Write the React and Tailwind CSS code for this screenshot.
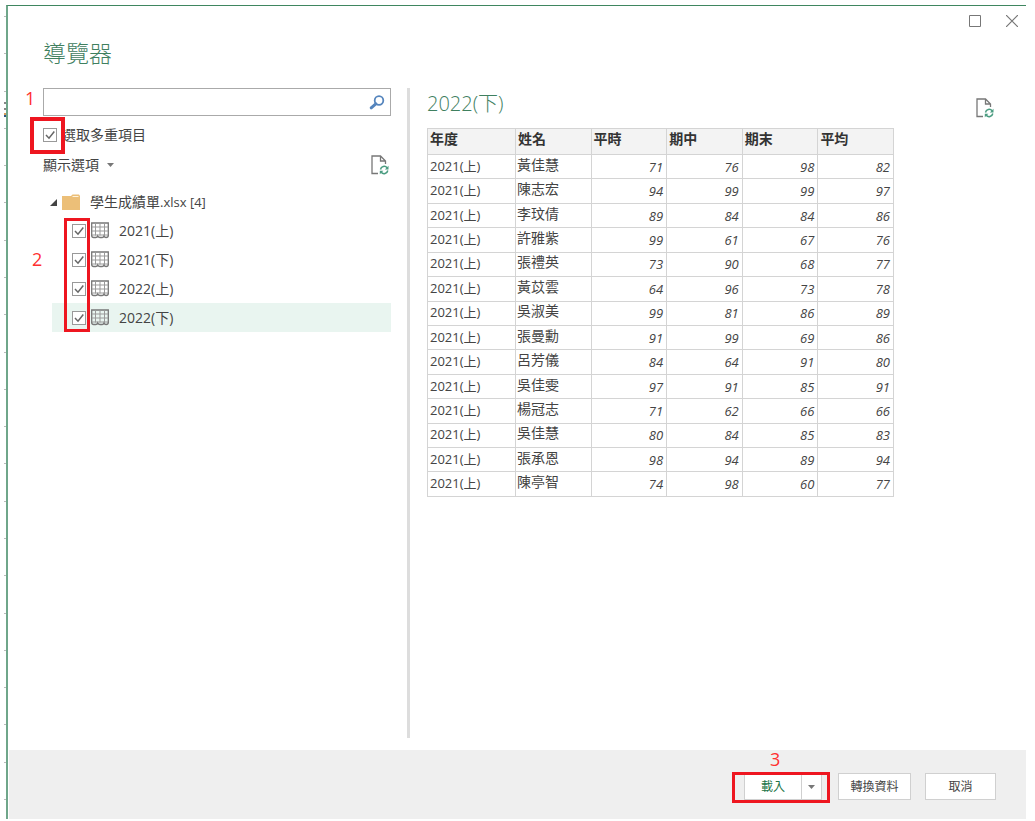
import { useState } from 'react';

const SHEETS = ['2021(上)', '2021(下)', '2022(上)', '2022(下)'];

const COLUMNS = ['年度', '姓名', '平時', '期中', '期末', '平均'];

const ROWS = [
	['2021(上)', '黃佳慧', 71, 76, 98, 82],
	['2021(上)', '陳志宏', 94, 99, 99, 97],
	['2021(上)', '李玟倩', 89, 84, 84, 86],
	['2021(上)', '許雅紫', 99, 61, 67, 76],
	['2021(上)', '張禮英', 73, 90, 68, 77],
	['2021(上)', '黃苡雲', 64, 96, 73, 78],
	['2021(上)', '吳淑美', 99, 81, 86, 89],
	['2021(上)', '張曼勳', 91, 99, 69, 86],
	['2021(上)', '呂芳儀', 84, 64, 91, 80],
	['2021(上)', '吳佳雯', 97, 91, 85, 91],
	['2021(上)', '楊冠志', 71, 62, 66, 66],
	['2021(上)', '吳佳慧', 80, 84, 85, 83],
	['2021(上)', '張承恩', 98, 94, 89, 94],
	['2021(上)', '陳亭智', 74, 98, 60, 77],
];

const RefreshPageIcon = () => (
	<svg width="18" height="20" viewBox="0 0 18 20" fill="none">
		<path d="M7 18.5H1V1h8.500l5 5v3M9.500 1v5H14" stroke="#777" strokeWidth="1.300" />
		<path d="M9.500 14.500a3.800 3.800 0 0 1 6.600-1.800M16.800 15.500a3.800 3.800 0 0 1-6.600 1.800" stroke="#4a9c80" strokeWidth="1.500" />
		<path d="M17.500 10.800v3.600h-3.600zM8.800 19.300v-3.600h3.600z" fill="#4a9c80" />
	</svg>
);

const SearchIcon = () => (
	<svg width="16" height="15" viewBox="0 0 16 15" fill="none" stroke="#5585bd">
		<circle cx="10" cy="5.5" r="4.300" strokeWidth="1.800" />
		<path d="M6.800 8.800 2.200 12.800" strokeWidth="3" strokeLinecap="round" />
	</svg>
);

const FolderIcon = () => (
	<svg width="18" height="16" viewBox="0 0 18 16">
		<path d="M0 2h9l1.500-1.500H17L18 2v14H0z" fill="#ecbf78" />
		<path d="M10.500 2.500h6" stroke="#fff3dc" />
	</svg>
);

const SheetIcon = () => (
	<svg width="18" height="17" viewBox="0 0 18 17" fill="none" stroke="#777">
		<path d="M.700 14V1h16.600v13" strokeWidth="1.300" />
		<path d="M4.500 1v12.500M9 1v12.500M13.500 1v12.500M1 5h16M1 9h16M1 13h16" stroke="#999" />
		<path d="M.700 13.500q0 2 2 2h2q1.500 0 2-1.500 .800 1.500 2.300 1.500h2.200q1.300 0 1.800-1.500 .700 1.500 2 1.500 2.300 0 2.300-2" strokeWidth="1.300" />
	</svg>
);

const Caret = () => (
	<svg width="7" height="4" viewBox="0 0 7 4">
		<path d="M0 0h7L3.500 4z" fill="#777" />
	</svg>
);

const CheckBox = ({ checked, onChange }) => (
	<span className="relative block size-[14px] shrink-0">
		<input
			type="checkbox"
			checked={checked}
			onChange={onChange}
			className="block size-[14px] appearance-none border border-[#999] bg-white"
		/>
		{checked && (
			<svg className="pointer-events-none absolute inset-0" width="14" height="14" viewBox="0 0 14 14" fill="none">
				<path d="m3 7 3 3.200L11.300 3.500" stroke="#666" strokeWidth="1.500" />
			</svg>
		)}
	</span>
);

const Step = ({ children, className }) => (
	<span className={`absolute text-[18px] leading-[20px] text-[#ff3030] ${className}`}>{children}</span>
);

const App = () => {
	const [multiple, setMultiple] = useState(true);
	const [picked, setPicked] = useState(SHEETS);
	const [query, setQuery] = useState('');

	const toggle = name => {
		setPicked(picked.includes(name) ? picked.filter(p => p !== name) : [...picked, name]);
	};

	return (
		<div className="flex h-screen bg-white pr-[9px] font-['Open_Sans','Noto_Sans_CJK_TC',sans-serif] text-[14px] leading-[20px] text-[#444]">
			{/* Row marks of the worksheet behind the dialog */}
			<div className="relative flex w-[6px] shrink-0 flex-col items-end justify-between pt-4 pb-[21px]">
				{Array.from({ length: 22 }, (_, i) => (
					<span key={i} className="h-px w-[2px] bg-[#bbb]" />
				))}
				<svg className="absolute top-[102px] right-0" width="2" height="16" viewBox="0 0 2 16">
					<path d="M0 0h2v2H0zM0 6h2v2H0z" fill="#888" />
					<path d="M0 11h2v2H0z" fill="#d79a5b" />
					<path d="M0 13h2v2H0z" fill="#2f5580" />
				</svg>
			</div>

			<div className="flex min-w-0 flex-1 flex-col pt-[5px] pb-[2px]">
				<div className="flex min-h-0 flex-1 flex-col border-t border-l-2 border-t-[#3f8660] border-l-[#6fa68a]">
					<div className="flex justify-end gap-[25px] pt-[9px] pr-[8px]">
						<button aria-label="Maximize">
							<svg width="12" height="12" viewBox="0 0 12 12" fill="none">
								<path d="M.500.500h11v11H.500z" stroke="#777" />
							</svg>
						</button>
						<button aria-label="Close">
							<svg width="12" height="12" viewBox="0 0 12 12" fill="none">
								<path d="m0 0 12 12M12 0 0 12" stroke="#777" strokeWidth="1.200" />
							</svg>
						</button>
					</div>

					<h1 className="mt-[10px] pl-[35px] text-[23px] leading-[32px] font-light text-[#3f805f]">導覽器</h1>

					<div className="mt-[19px] flex min-h-0 flex-1 pb-[12px]">
						{/* Left pane: search and tree */}
						<div className="flex w-[399px] shrink-0 flex-col pr-[16px] pl-[35px]">
							<div className="relative flex h-[28px] items-center border border-[#aaa] pr-[5px]">
								<Step className="-top-px -left-[19px]">1</Step>
								<input
									aria-label="Search"
									value={query}
									onChange={e => setQuery(e.target.value)}
									className="h-full min-w-0 flex-1 px-2 outline-none"
								/>
								<SearchIcon />
							</div>

							<label className="relative mt-[9px] flex items-center gap-[5px]">
								<CheckBox checked={multiple} onChange={() => setMultiple(!multiple)} />
								選取多重項目
								<span className="absolute -top-[8px] -left-[13px] h-[37px] w-[35px] border-4 border-[#ee1620]" />
							</label>

							<div className="mt-[10px] flex items-center justify-between pr-[2px]">
								<button className="flex items-center gap-[8px]">
									顯示選項
									<Caret />
								</button>
								<button aria-label="Refresh">
									<RefreshPageIcon />
								</button>
							</div>

							<div className="mt-[17px] flex items-center pl-[7px]">
								<svg width="7" height="7" viewBox="0 0 7 7">
									<path d="M7 0v7H0z" fill="#444" />
								</svg>
								<span className="ml-[5px]">
									<FolderIcon />
								</span>
								<span className="ml-[10px]">
									學生成績單<span className="text-[13px]">.xlsx [4]</span>
								</span>
							</div>

							<div className="relative ml-[9px] pt-[4px]">
								{SHEETS.map(name => (
									<label
										key={name}
										className={`flex h-[29px] items-center pl-[20px] ${name === '2022(下)' ? 'bg-[#e9f5f0]' : ''}`}
									>
										<CheckBox checked={picked.includes(name)} onChange={() => toggle(name)} />
										<span className="ml-[5px]">
											<SheetIcon />
										</span>
										<span className="ml-[10px]">{name}</span>
									</label>
								))}
								<Step className="top-[37px] -left-[20px]">2</Step>
								<span className="absolute top-[6px] left-[12px] h-[114px] w-[26px] border-[3px] border-[#ee1620]" />
							</div>
						</div>

						<div className="w-[3px] shrink-0 bg-[#ddd]" />

						{/* Right pane: preview */}
						<div className="min-w-0 flex-1 pr-[32px] pl-[17px]">
							<div className="flex h-[40px] items-end justify-between pb-[10px]">
								<h2 className="text-[20px] leading-[28px] font-light text-[#3f805f]">2022(下)</h2>
								<button aria-label="Refresh preview">
									<RefreshPageIcon />
								</button>
							</div>
							<table className="h-[369px] w-[467px] table-fixed border-collapse leading-[18px]">
								<thead>
									<tr className="h-[26px] bg-[#f3f3f3]">
										{COLUMNS.map((name, i) => (
											<th
												key={name}
												className={`border border-[#d4d4d4] px-[2px] pb-[6px] text-left font-bold text-[#333] ${i === 0 ? 'w-[88px]' : ''}`}
											>
												{name}
											</th>
										))}
									</tr>
								</thead>
								<tbody>
									{ROWS.map(([year, name, ...scores], i) => (
										<tr key={i}>
											<td className="border border-[#d4d4d4] px-[2px] pb-[2px] text-[13px]">{year}</td>
											<td className="border border-[#d4d4d4] px-px pb-[4px]">{name}</td>
											{scores.map((score, j) => (
												<td key={j} className="border border-[#d4d4d4] px-[3px] text-right text-[13px] italic">
													{score}
												</td>
											))}
										</tr>
									))}
								</tbody>
							</table>
						</div>
					</div>

					<div className="ml-px flex h-[69px] shrink-0 items-start justify-end bg-[#efefef] pt-[23px] pr-[30px] text-[12px]">
						<div className="relative mr-[16px] flex h-[27px]">
							<button className="w-[58px] border border-[#d0d0d0] bg-white text-[#217346]">載入</button>
							<button
								aria-label="More load options"
								className="flex w-[20px] items-center justify-center border border-l-0 border-[#d0d0d0] bg-white"
							>
								<Caret />
							</button>
							<Step className="-top-[24px] left-[26px]">3</Step>
							<span className="absolute -top-px -left-[12px] h-[31px] w-[98px] border-[3px] border-[#ee1620]" />
						</div>
						<button className="mr-[14px] h-[27px] w-[73px] border border-[#d0d0d0] bg-white">轉換資料</button>
						<button className="h-[27px] w-[71px] border border-[#d0d0d0] bg-white">取消</button>
					</div>
				</div>
			</div>
		</div>
	);
};

export default App;
